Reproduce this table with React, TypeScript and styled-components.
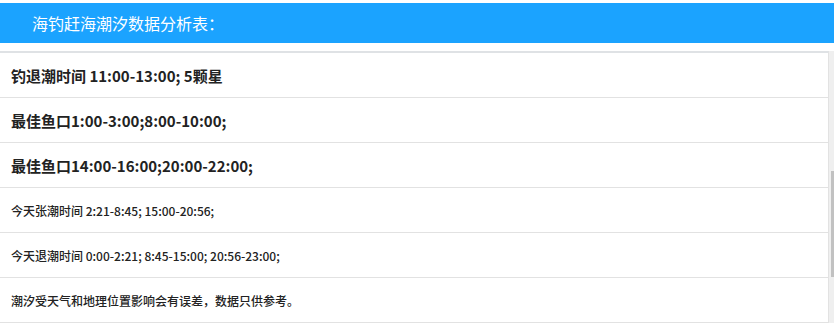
import styled, { createGlobalStyle } from 'styled-components';

const GlobalStyle = createGlobalStyle`
  html, body {
    margin: 0;
    padding: 0;
    background: #fff;
    overflow: hidden;
  }
  body {
    font-family: "Noto Sans CJK SC", "Noto Sans", sans-serif;
    color: #222;
  }
`;

const Page = styled.div`
  padding-top: 3px;
  width: 834px;
`;

const Header = styled.div`
  height: 40px;
  background: #1ba3ff;
  color: #fff;
  font-size: 16px;
  line-height: 40px;
  padding-left: 32px;
`;

const Panel = styled.div`
  display: flex;
  margin-top: 8px;
`;

const List = styled.ul`
  flex: 1;
  margin: 0;
  padding: 0;
  list-style: none;
  border-top: 2px solid #dfe2e5;
  border-right: 1px solid #e2e2e2;
`;

const Row = styled.li<{ $big?: boolean }>`
  height: 44px;
  display: flex;
  align-items: center;
  padding-left: 11px;
  border-bottom: 1px solid #e2e2e2;
  font-size: ${p => (p.$big ? '15px' : '12px')};
  font-weight: ${p => (p.$big ? 700 : 500)};
  color: #222;
`;

const Track = styled.div`
  width: 5px;
  background: #efefef;
`;

const Thumb = styled.div`
  margin-top: 120px;
  margin-left: 2px;
  height: 106px;
  background: #c1c1c1;
`;

const rows: { text: string; big?: boolean }[] = [
  { text: '钓退潮时间 11:00-13:00; 5颗星', big: true },
  { text: '最佳鱼口1:00-3:00;8:00-10:00;', big: true },
  { text: '最佳鱼口14:00-16:00;20:00-22:00;', big: true },
  { text: '今天张潮时间 2:21-8:45; 15:00-20:56;' },
  { text: '今天退潮时间 0:00-2:21; 8:45-15:00; 20:56-23:00;' },
  { text: '潮汐受天气和地理位置影响会有误差，数据只供参考。' },
];

export default function App() {
  return (
    <Page>
      <GlobalStyle />
      <Header>海钓赶海潮汐数据分析表：</Header>
      <Panel>
        <List>
          {rows.map(r => (
            <Row key={r.text} $big={r.big}>
              {r.text}
            </Row>
          ))}
        </List>
        <Track>
          <Thumb />
        </Track>
      </Panel>
    </Page>
  );
}
